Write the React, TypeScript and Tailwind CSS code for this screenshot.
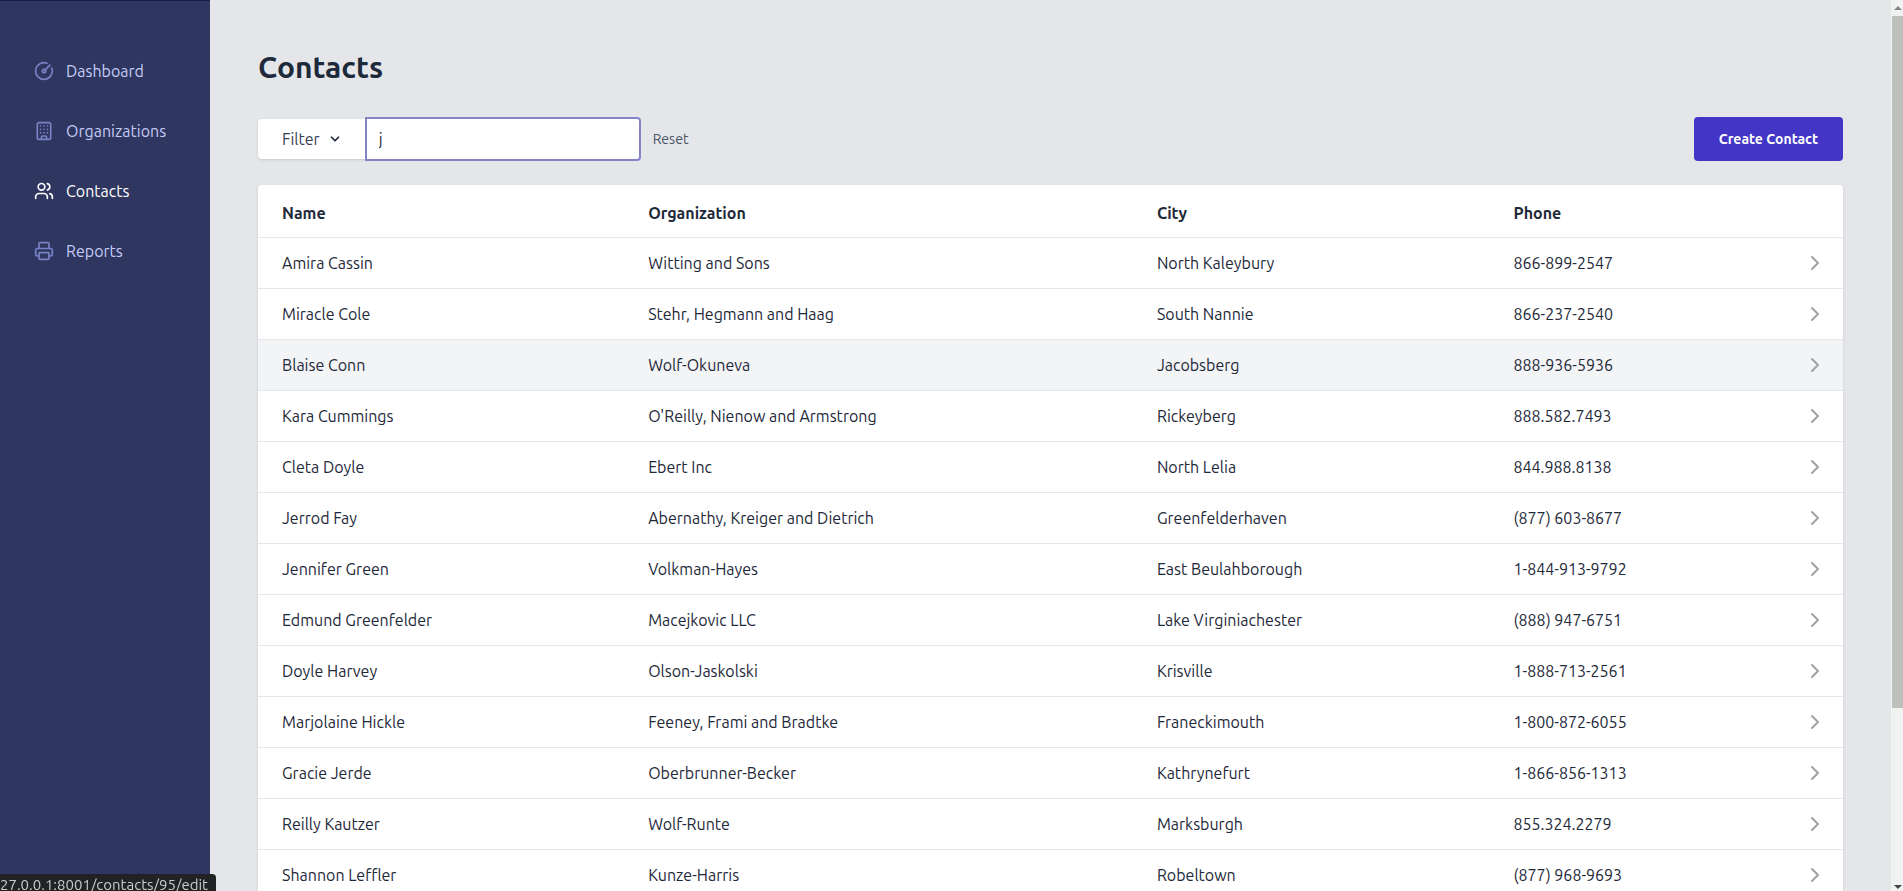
import { Building, ChevronDown, ChevronRight, CircleGauge, Printer, Users } from "lucide-react";

const navItems = [
  { label: "Dashboard", href: "/", icon: CircleGauge },
  { label: "Organizations", href: "/organizations", icon: Building },
  { label: "Contacts", href: "/contacts", icon: Users, active: true },
  { label: "Reports", href: "/reports", icon: Printer },
];

const contacts = [
  { name: "Amira Cassin", organization: "Witting and Sons", city: "North Kaleybury", phone: "866-899-2547" },
  { name: "Miracle Cole", organization: "Stehr, Hegmann and Haag", city: "South Nannie", phone: "866-237-2540" },
  { name: "Blaise Conn", organization: "Wolf-Okuneva", city: "Jacobsberg", phone: "888-936-5936", hovered: true },
  { name: "Kara Cummings", organization: "O'Reilly, Nienow and Armstrong", city: "Rickeyberg", phone: "888.582.7493" },
  { name: "Cleta Doyle", organization: "Ebert Inc", city: "North Lelia", phone: "844.988.8138" },
  { name: "Jerrod Fay", organization: "Abernathy, Kreiger and Dietrich", city: "Greenfelderhaven", phone: "(877) 603-8677" },
  { name: "Jennifer Green", organization: "Volkman-Hayes", city: "East Beulahborough", phone: "1-844-913-9792" },
  { name: "Edmund Greenfelder", organization: "Macejkovic LLC", city: "Lake Virginiachester", phone: "(888) 947-6751" },
  { name: "Doyle Harvey", organization: "Olson-Jaskolski", city: "Krisville", phone: "1-888-713-2561" },
  { name: "Marjolaine Hickle", organization: "Feeney, Frami and Bradtke", city: "Franeckimouth", phone: "1-800-872-6055" },
  { name: "Gracie Jerde", organization: "Oberbrunner-Becker", city: "Kathrynefurt", phone: "1-866-856-1313" },
  { name: "Reilly Kautzer", organization: "Wolf-Runte", city: "Marksburgh", phone: "855.324.2279" },
  { name: "Shannon Leffler", organization: "Kunze-Harris", city: "Robeltown", phone: "(877) 968-9693" },
];

function Sidebar() {
  return (
    <nav className="w-[210px] shrink-0 border-t border-[#1b1c4b] bg-[#2f365f] px-[34px] py-[46px]">
      {navItems.map(({ label, href, icon: Icon, active }) => (
        <a key={label} href={href} className="mb-3 flex h-12 items-center">
          <Icon size={20} className={active ? "mr-3 text-white" : "mr-3 text-[#7a82c6]"} />
          <span className={active ? "text-white" : "text-[#c3cbf7]"}>{label}</span>
        </a>
      ))}
    </nav>
  );
}

function Toolbar() {
  return (
    <div className="mb-6 flex items-center justify-between">
      <div className="flex items-center">
        <button type="button" className="flex h-10 items-center gap-2 rounded-l bg-white pr-[23px] pl-6 text-gray-700 shadow-sm">
          Filter
          <ChevronDown size={14} strokeWidth={3} className="text-gray-800" />
        </button>
        <input
          type="text"
          aria-label="Search"
          defaultValue="j"
          className="h-11 w-[276px] rounded-r border-2 border-[#8583c8] bg-white px-3 text-gray-800 outline-none"
        />
        <button type="button" className="ml-3 text-sm text-gray-600">
          Reset
        </button>
      </div>
      <a href="/contacts/create" className="flex h-11 items-center rounded bg-[#4335c6] px-[25px] text-sm font-bold text-white">
        Create Contact
      </a>
    </div>
  );
}

function ContactsTable() {
  return (
    <div className="overflow-hidden rounded bg-white shadow">
      <table className="w-full table-fixed text-left whitespace-nowrap text-gray-800">
        <thead>
          <tr className="h-[52px] font-bold">
            <th className="w-[23.1%] px-6 pt-1">Name</th>
            <th className="w-[32.1%] px-6 pt-1">Organization</th>
            <th className="w-[22.5%] px-6 pt-1">City</th>
            <th className="px-6 pt-1" colSpan={2}>
              Phone
            </th>
          </tr>
        </thead>
        <tbody>
          {contacts.map((c) => (
            <tr key={c.name} className={c.hovered ? "h-[51px] border-t border-gray-200 bg-gray-100" : "h-[51px] border-t border-gray-200"}>
              <td className="px-6">
                <a href="/contacts/95/edit">{c.name}</a>
              </td>
              <td className="px-6">{c.organization}</td>
              <td className="px-6">{c.city}</td>
              <td className="px-6">{c.phone}</td>
              <td className="px-4">
                <ChevronRight size={24} className="ml-auto text-[#a0a3a6]" />
              </td>
            </tr>
          ))}
        </tbody>
      </table>
    </div>
  );
}

function Scrollbar() {
  return (
    <div className="flex w-3 shrink-0 flex-col items-center bg-[#f1f2f2] pl-px">
      <div className="flex h-4 items-center">
        <svg viewBox="0 0 8 4" className="h-1 w-2 fill-[#858585]">
          <path d="M0 4 4 0l4 4z" />
        </svg>
      </div>
      <div className="h-[77.7%] w-full bg-[#bdc0bd]" />
      <div className="mt-auto flex h-2 items-center">
        <svg viewBox="0 0 8 4" className="h-1 w-2 fill-[#444]">
          <path d="M0 0h8L4 4z" />
        </svg>
      </div>
    </div>
  );
}

export default function App() {
  return (
    <div className="flex h-screen overflow-hidden bg-[#e4e6ea] font-['Ubuntu','Noto_Sans',sans-serif] text-base">
      <Sidebar />
      <main className="min-w-0 flex-1 overflow-hidden px-12 pt-[49px]">
        <h1 className="mb-8 text-3xl font-bold text-gray-800">Contacts</h1>
        <Toolbar />
        <ContactsTable />
      </main>
      <Scrollbar />

      {/* Link address of the hovered row */}
      <div className="fixed bottom-0 left-0 h-[17px] rounded-tr bg-[#202223] pr-2 text-[15px] leading-[22px] text-[#c9cbcc]">
        27.0.0.1:8001/contacts/95/edit
      </div>
    </div>
  );
}
